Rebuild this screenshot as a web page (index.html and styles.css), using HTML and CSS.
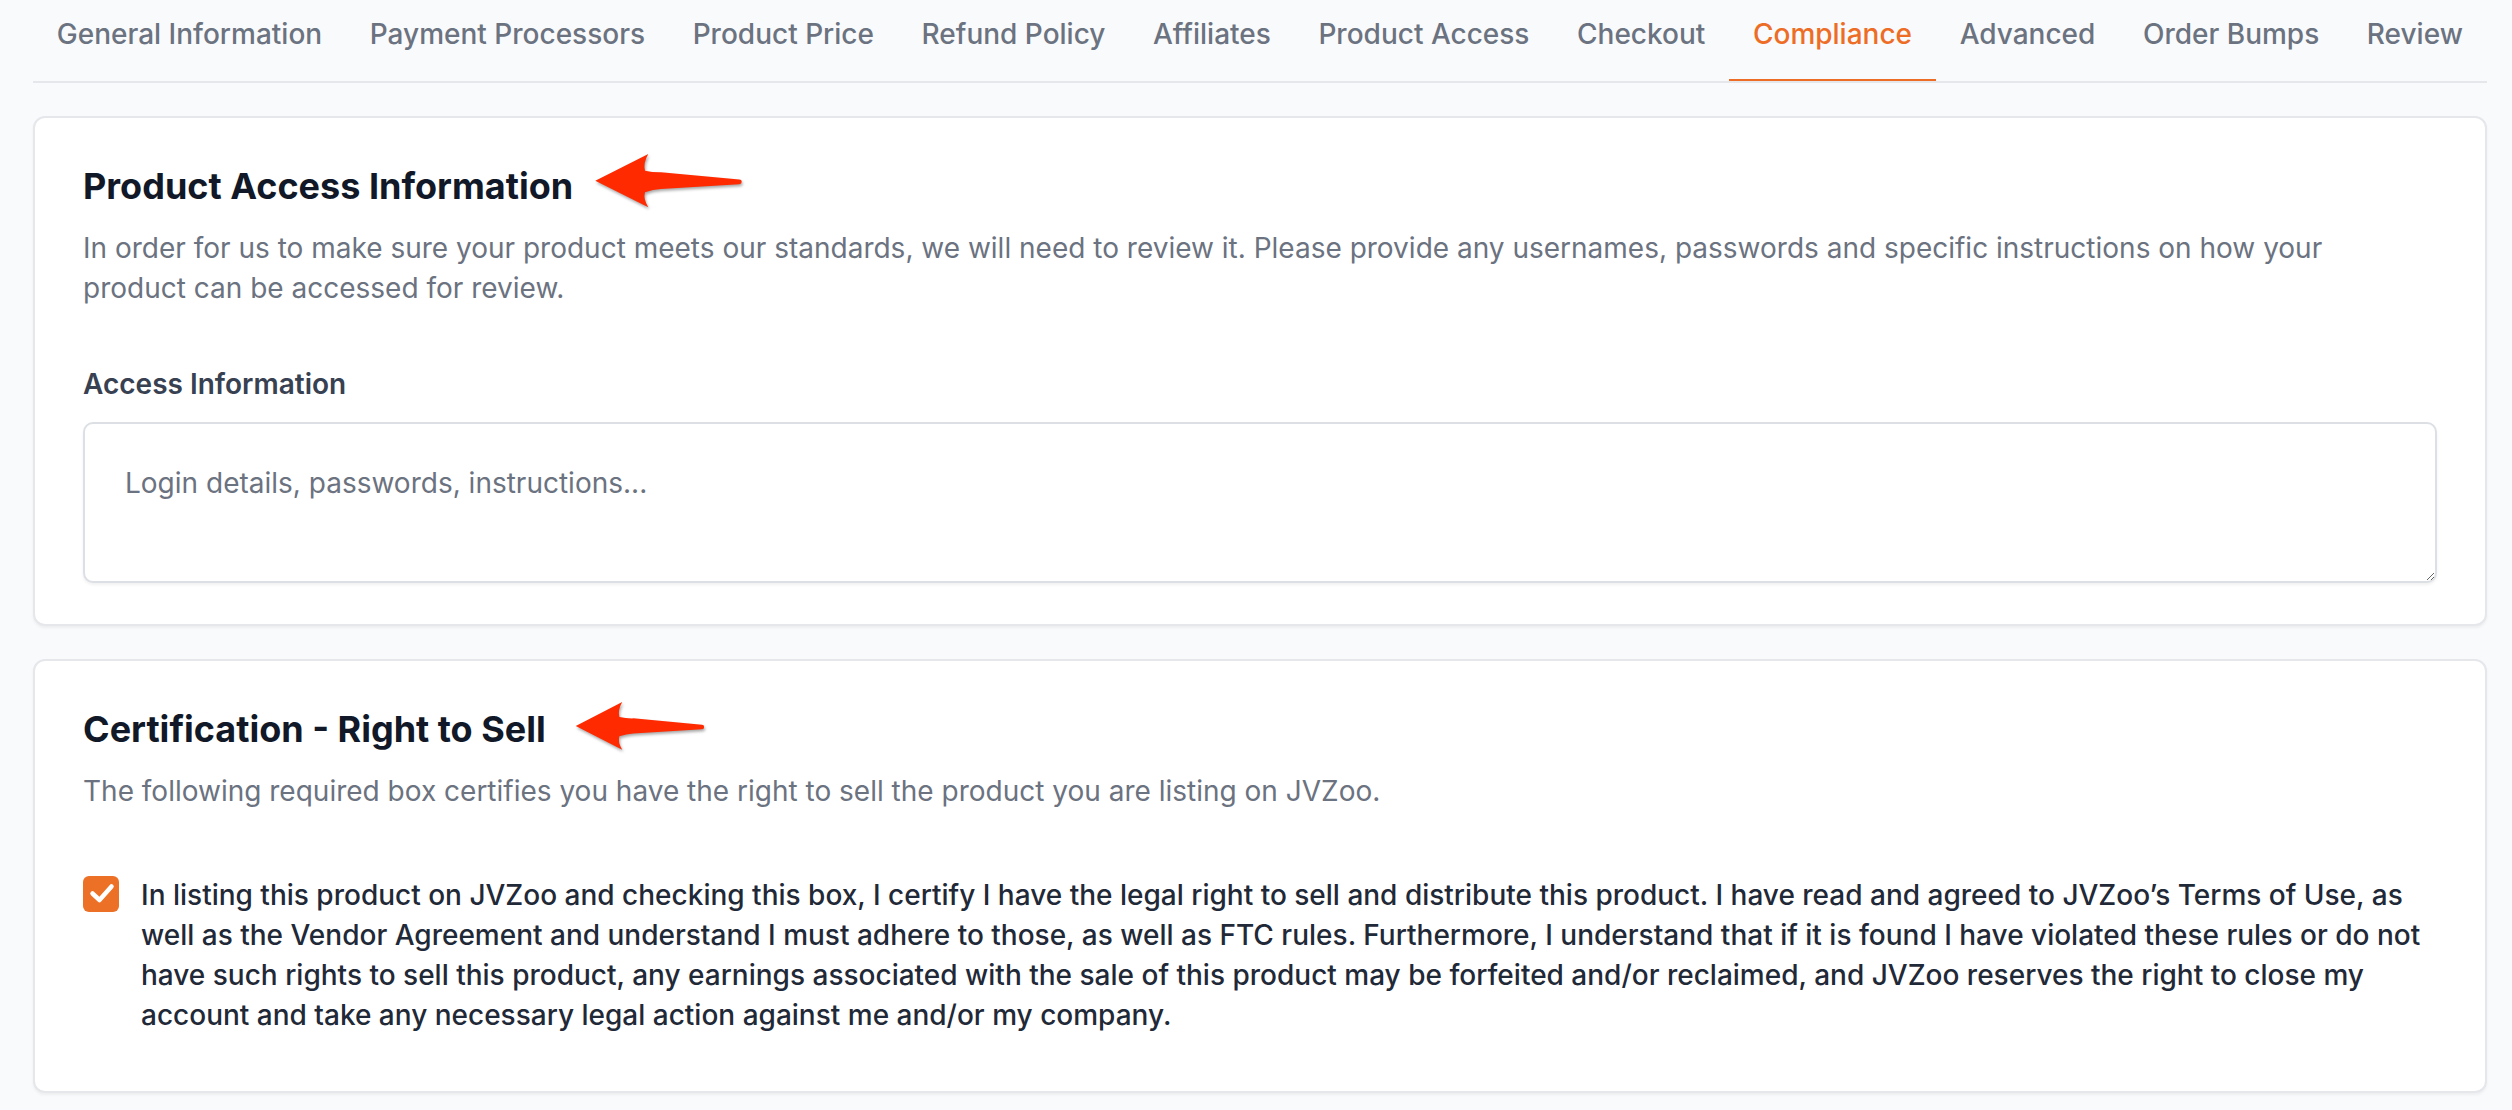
FILE: index.html
```html
<!DOCTYPE html>
<html lang="en">
<head>
<meta charset="utf-8">
<title>Compliance</title>
<link rel="stylesheet" href="styles.css">
</head>
<body>
<div class="page">
  <nav class="tabs">
    <a class="tab">General Information</a>
    <a class="tab">Payment Processors</a>
    <a class="tab">Product Price</a>
    <a class="tab">Refund Policy</a>
    <a class="tab">Affiliates</a>
    <a class="tab">Product Access</a>
    <a class="tab">Checkout</a>
    <a class="tab active">Compliance</a>
    <a class="tab">Advanced</a>
    <a class="tab">Order Bumps</a>
    <a class="tab">Review</a>
  </nav>
  <main class="sections">
    <section class="card">
      <h2 class="card-title">Product Access Information<span class="annot annot-1"><svg viewBox="0 0 154 60" preserveAspectRatio="none"><path d="M4.3,27.7 L57.3,1 Q52,10 54,17.7 Q62,19.5 70,19.3 L148.3,26.4 A2.45,2.45 0 0 1 148.3,31.3 L70,36 Q62,36.5 54,39.3 Q52,46 57.3,54.3 Z"/></svg></span></h2>
      <p class="card-desc">In order for us to make sure your product meets our standards, we will need to review it. Please provide any usernames, passwords and specific instructions on how your product can be accessed for review.</p>
      <label class="field-label" for="access">Access Information</label>
      <textarea id="access" class="field-textarea" placeholder="Login details, passwords, instructions..."></textarea>
    </section>
    <section class="card">
      <h2 class="card-title">Certification - Right to Sell<span class="annot annot-2"><svg viewBox="0 0 154 60" preserveAspectRatio="none"><path d="M4.3,27.7 L57.3,1 Q52,10 54,17.7 Q62,19.5 70,19.3 L148.3,26.4 A2.45,2.45 0 0 1 148.3,31.3 L70,36 Q62,36.5 54,39.3 Q52,46 57.3,54.3 Z"/></svg></span></h2>
      <p class="card-desc">The following required box certifies you have the right to sell the product you are listing on JVZoo.</p>
      <label class="certify">
        <span class="checkbox"><svg viewBox="0 0 36 36"><polyline points="9.5,17.5 16.5,24 28.5,10.5"/></svg></span>
        <span class="certify-text">In listing this product on JVZoo and checking this box, I certify I have the legal right to sell and distribute this product. I have read and agreed to JVZoo’s Terms of Use, as well as the Vendor Agreement and understand I must adhere to those, as well as FTC rules. Furthermore, I understand that if it is found I have violated these rules or do not have such rights to sell this product, any earnings associated with the sale of this product may be forfeited and/or reclaimed, and JVZoo reserves the right to close my account and take any necessary legal action against me and/or my company.</span>
      </label>
    </section>
  </main>
</div>
</body>
</html>
```

FILE: styles.css
```css
html, body {
  margin: 0;
  padding: 0;
}

body {
  background: #f9fafb;
  font-family: Inter, "Noto Sans", "Liberation Sans", sans-serif;
  color: #111827;
}

.page {
  padding: 0 25px 17px 33px;
}

/* Tabs */
.tabs {
  display: flex;
  border-bottom: 2px solid #e5e7eb;
}

.tab {
  padding: 14px 23.8px 25px;
  border-bottom: 2px solid transparent;
  font-size: 28px;
  line-height: 40px;
  font-weight: 500;
  color: #6b7280;
  white-space: nowrap;
  cursor: pointer;
}

.tab.active {
  color: #ed6d26;
  border-bottom-color: #ed6d26;
}

/* Cards */
.sections {
  display: flex;
  flex-direction: column;
  gap: 33px;
  padding-top: 33px;
}

.card {
  background: #ffffff;
  border: 2px solid #e5e7eb;
  border-radius: 12px;
  padding: 40px 48px 41px;
  box-shadow: 0 2px 3px rgba(0, 0, 0, 0.05);
}

.card-title {
  margin: 0;
  font-size: 36px;
  line-height: 56px;
  font-weight: 700;
  color: #111827;
}

.annot {
  position: relative;
  display: inline-block;
  width: 0;
  height: 0;
  vertical-align: top;
}

.annot svg {
  position: absolute;
  fill: #ff2a00;
  filter: drop-shadow(1px 2px 1.5px rgba(0, 0, 0, 0.35));
}

.annot-1 svg {
  left: 18px;
  top: -5px;
  width: 154px;
  height: 60px;
}

.annot-2 svg {
  left: 26px;
  top: 0;
  width: 135px;
  height: 54px;
}

.card-desc {
  margin: 14px 0 0;
  max-width: 2330px;
  font-size: 28px;
  line-height: 40px;
  color: #6b7280;
}

.field-label {
  display: block;
  margin-top: 56px;
  font-size: 28px;
  line-height: 40px;
  font-weight: 600;
  color: #374151;
}

.field-textarea {
  display: block;
  box-sizing: border-box;
  width: 100%;
  height: 161px;
  margin: 18px 0 0;
  padding: 39px 40px;
  border: 2px solid #dcdfe4;
  border-radius: 10px;
  background: #ffffff;
  box-shadow: 0 2px 3px rgba(0, 0, 0, 0.06);
  font-family: Inter, "Noto Sans", "Liberation Sans", sans-serif;
  font-size: 28px;
  line-height: 40px;
  color: #111827;
  outline: none;
}

.field-textarea::placeholder {
  color: #6b7280;
  opacity: 1;
}

/* Certification checkbox */
.certify {
  display: flex;
  align-items: flex-start;
  gap: 22px;
  margin: 64px 0 15px;
  cursor: pointer;
}

.checkbox {
  flex: none;
  width: 36px;
  height: 36px;
  margin-top: 1px;
  border-radius: 6px;
  background: #ed7027;
  display: flex;
}

.checkbox svg {
  width: 36px;
  height: 36px;
  fill: none;
  stroke: #ffffff;
  stroke-width: 4.5;
  stroke-linecap: round;
  stroke-linejoin: round;
}

.certify-text {
  font-size: 28px;
  line-height: 40px;
  font-weight: 500;
  color: #1f2937;
}
```
